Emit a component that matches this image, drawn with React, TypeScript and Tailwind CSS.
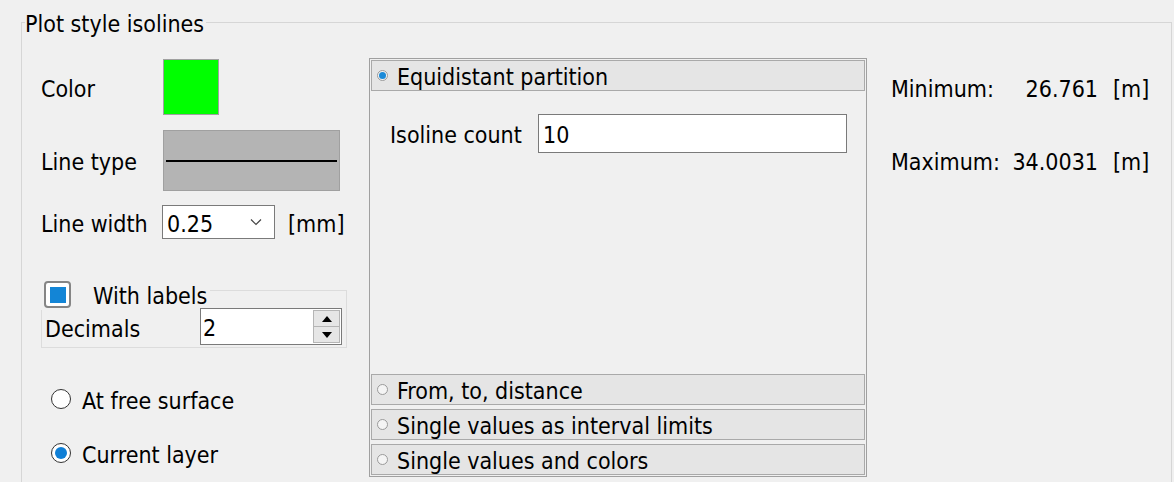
import React from 'react';

const font = { fontFamily: '"DejaVu Sans Condensed", "Liberation Sans", sans-serif' };

const Radio: React.FC<{ checked?: boolean }> = ({ checked }) => (
  <span className="w-[20px] h-[20px] rounded-full border border-[#333] bg-white flex items-center justify-center shrink-0">
    {checked && <span className="w-[12px] h-[12px] rounded-full bg-[#0f7fd6]" />}
  </span>
);

const SmallRadio: React.FC<{ checked?: boolean }> = ({ checked }) => (
  <span className="w-[11px] h-[11px] rounded-full border border-[#9a9a9a] bg-[#f4f4f4] flex items-center justify-center shrink-0">
    {checked && <span className="w-[7px] h-[7px] rounded-full bg-[#1b8ad8]" />}
  </span>
);

const SectionHeader: React.FC<{ label: string; checked?: boolean }> = ({ label, checked }) => (
  <div className="h-[31px] border border-[#a9a9a9] bg-[#e5e5e5] flex items-center pl-[5px] gap-[9px] shrink-0">
    <SmallRadio checked={checked} />
    <span className="pt-[2px]">{label}</span>
  </div>
);

export default function App() {
  return (
    <div
      className="w-[1174px] h-[482px] bg-[#f0f0f0] text-black text-[23px] leading-[28px] overflow-hidden"
      style={font}
    >
      <fieldset className="ml-[21px] mt-[8px] w-[1151px] h-[500px] border border-[#d6d6d6] p-0 m-0">
        <legend className="ml-[3px] pr-[2px] px-0 h-[28px] pt-[2px]">Plot style isolines</legend>
        <div className="flex items-start pt-[22px]">
          {/* left column */}
          <div className="w-[306px] ml-[19px] flex flex-col">
            <div className="mt-[1px] h-[56px] flex items-center">
              <span className="w-[122px] pt-[3px]">Color</span>
              <div className="w-[56px] h-[56px] border border-[#a0a0a0] bg-[#00ff00]" />
            </div>
            <div className="mt-[15px] h-[61px] flex items-center">
              <span className="w-[122px] pt-[3px]">Line type</span>
              <div className="w-[177px] h-[61px] border border-[#a0a0a0] bg-[#b4b4b4] flex items-center px-[2px]">
                <div className="w-full h-[2px] bg-black" />
              </div>
            </div>
            <div className="mt-[14px] h-[34px] flex items-center">
              <span className="w-[121px] pt-[4px]">Line width</span>
              <div className="w-[113px] h-[34px] border border-[#7a7a7a] bg-white flex items-center justify-between pl-[4px] pr-[12px]">
                <span className="pt-[3px]">0.25</span>
                <svg width="12" height="8" viewBox="0 0 12 8" fill="none">
                  <path d="M1 1.5 L6 6.5 L11 1.5" stroke="#444" strokeWidth="1.2" />
                </svg>
              </div>
              <span className="ml-[13px] pt-[4px]">[mm]</span>
            </div>
            <div className="mt-[51px] border border-[#dcdcdc] flex flex-col">
              <div className="-mt-[12px] -ml-px self-start h-[31px] bg-[#f0f0f0] flex items-center pl-[3px] pr-[3px] gap-[22px]">
                <span className="w-[27px] h-[27px] rounded-[4px] border-2 border-[#858585] bg-white flex items-center justify-center">
                  <span className="w-[16px] h-[16px] bg-[#1385d6]" />
                </span>
                <span className="pt-[2px]">With labels</span>
              </div>
              <div className="-mt-[2px] h-[37px] flex items-center pl-[3px]">
                <span className="w-[155px] pt-[4px]">Decimals</span>
                <div className="w-[142px] h-[37px] border border-[#7a7a7a] bg-white flex items-stretch">
                  <span className="flex-1 pl-[2px] pt-[3px] flex items-center">2</span>
                  <div className="w-[27px] flex flex-col my-[1px] mr-[1px]">
                    <div className="flex-1 bg-[#e6e6e6] border border-[#b5b5b5] flex items-center justify-center">
                      <svg width="10" height="6" viewBox="0 0 10 6"><path d="M0 6 L5 0 L10 6 Z" fill="#000" /></svg>
                    </div>
                    <div className="flex-1 bg-[#e6e6e6] border border-t-0 border-[#b5b5b5] flex items-center justify-center">
                      <svg width="10" height="6" viewBox="0 0 10 6"><path d="M0 0 L5 6 L10 0 Z" fill="#000" /></svg>
                    </div>
                  </div>
                </div>
              </div>
              <div className="h-[2px]" />
            </div>
            <div className="mt-[41px] h-[20px] flex items-center gap-[11px] pl-[10px]">
              <Radio />
              <span className="pt-[3px]">At free surface</span>
            </div>
            <div className="mt-[34px] h-[20px] flex items-center gap-[11px] pl-[10px]">
              <Radio checked />
              <span className="pt-[3px]">Current layer</span>
            </div>
          </div>

          {/* middle panel */}
          <div className="ml-[22px] w-[498px] h-[419px] border border-[#a0a0a0] p-px flex flex-col">
            <SectionHeader label="Equidistant partition" checked />
            <div className="flex-1 pl-[19px] pt-[23px]">
              <div className="flex items-center">
                <span className="w-[148px] pt-[3px]">Isoline count</span>
                <div className="w-[309px] h-[39px] border border-[#7a7a7a] bg-white flex items-center pl-[4px] pt-[3px]">10</div>
              </div>
            </div>
            <div className="flex flex-col gap-[4px]">
              <SectionHeader label="From, to, distance" />
              <SectionHeader label="Single values as interval limits" />
              <SectionHeader label="Single values and colors" />
            </div>
          </div>

          {/* right column */}
          <div className="ml-[24px] mt-[15px] grid grid-cols-[auto_auto_auto] gap-y-[43px] items-center">
            <span className="w-[120px] pt-[2px]">Minimum:</span>
            <span className="w-[87px] text-right pt-[2px]">26.761</span>
            <span className="ml-[15px] pt-[2px]">[m]</span>
            <span className="w-[120px] pt-[2px]">Maximum:</span>
            <span className="w-[87px] text-right pt-[2px]">34.0031</span>
            <span className="ml-[15px] pt-[2px]">[m]</span>
          </div>
        </div>
      </fieldset>
    </div>
  );
}
